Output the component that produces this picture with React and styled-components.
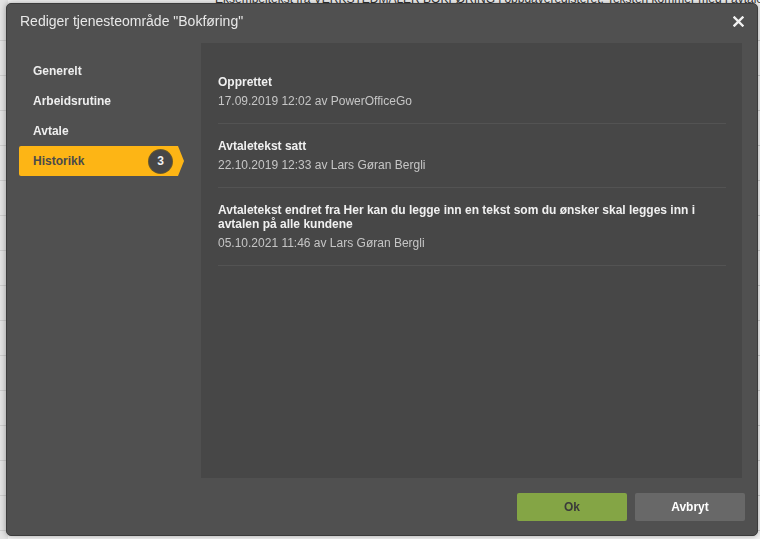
import React from 'react';
import styled, { createGlobalStyle } from 'styled-components';

const GlobalStyle = createGlobalStyle`
  html, body {
    margin: 0;
    padding: 0;
    background: #f4f4f4;
    font-family: "Liberation Sans", Arial, sans-serif;
    overflow: hidden;
  }
`;

const sections = ['Generelt', 'Arbeidsrutine', 'Avtale', 'Historikk'];

const history = [
  { title: 'Opprettet', meta: '17.09.2019 12:02 av PowerOfficeGo' },
  { title: 'Avtaletekst satt', meta: '22.10.2019 12:33 av Lars Gøran Bergli' },
  {
    title:
      'Avtaletekst endret fra Her kan du legge inn en tekst som du ønsker skal legges inn i avtalen på alle kundene',
    meta: '05.10.2021 11:46 av Lars Gøran Bergli',
  },
];

const App = () => {
  return (
    <>
      <GlobalStyle />
      <Page>
        <PageText>Eksempeltekst fra VERKSTEDMALER BOKFØRING i oppgaveregisteret. Teksten kommer med i avtalen</PageText>
        {Array.from({ length: 16 }).map((_, i) => (
          <PageRow key={i} />
        ))}
      </Page>
      <Dialog>
        <Header>
          <Title>Rediger tjenesteområde "Bokføring"</Title>
          <CloseButton aria-label="Lukk">
            <svg width="11" height="11" viewBox="0 0 11 11">
              <path d="M1.5 1.5 L9.5 9.5 M9.5 1.5 L1.5 9.5" stroke="#f2f2f2" strokeWidth="2.4" strokeLinecap="square" />
            </svg>
          </CloseButton>
        </Header>
        <Body>
          <Sidebar>
            {sections.map((s) => (
              <NavItem key={s} selected={s === 'Historikk'}>
                {s}
                {s === 'Historikk' && <Badge>3</Badge>}
              </NavItem>
            ))}
          </Sidebar>
          <Panel>
            {history.map((h, i) => (
              <Entry key={i}>
                <EntryTitle>{h.title}</EntryTitle>
                <EntryMeta>{h.meta}</EntryMeta>
              </Entry>
            ))}
          </Panel>
        </Body>
        <Footer>
          <Button variant="ok">Ok</Button>
          <Button>Avbryt</Button>
        </Footer>
      </Dialog>
    </>
  );
};

const Page = styled.div`
  height: 539px;
  background: #f6f6f6;
  background-image: linear-gradient(to right, #e4e4e4 0, #e4e4e4 8px, transparent 8px);
  overflow: hidden;
`;

const PageText = styled.div`
  margin-top: -8px;
  padding-left: 215px;
  height: 14px;
  font-size: 12px;
  color: #333;
  white-space: nowrap;
`;

const PageRow = styled.div`
  height: 34px;
  border-bottom: 1px solid #cfcfcf;
`;

const Dialog = styled.div`
  position: fixed;
  left: 6px;
  top: 3px;
  width: 752px;
  height: 533px;
  box-sizing: border-box;
  background: #505050;
  border: 1px solid #3c3c3c;
  border-radius: 5px;
  box-shadow: 0 0 6px rgba(0, 0, 0, 0.35);
  display: flex;
  flex-direction: column;
`;

const Header = styled.header`
  height: 39px;
  box-sizing: border-box;
  flex-shrink: 0;
  display: flex;
  align-items: center;
  justify-content: space-between;
  padding: 0 13px 5px 13px;
`;

const Title = styled.h1`
  margin: 0;
  font-size: 14px;
  font-weight: normal;
  color: #e8e8e8;
`;

const CloseButton = styled.button`
  background: none;
  border: 0;
  padding: 0;
  cursor: pointer;
  display: flex;
`;

const Body = styled.div`
  flex: 1;
  display: flex;
  padding-right: 15px;
  min-height: 0;
`;

const Sidebar = styled.nav`
  width: 182px;
  padding: 13px 0 0 12px;
  display: flex;
  flex-direction: column;
`;

const NavItem = styled.div`
  height: 30px;
  width: 165px;
  box-sizing: border-box;
  display: flex;
  align-items: center;
  padding: 0 12px 0 14px;
  font-size: 12px;
  font-weight: bold;
  color: ${(props) => (props.selected ? '#4a4a4a' : '#eeeeee')};
  background: ${(props) => (props.selected ? '#fdb515' : 'transparent')};
  clip-path: ${(props) =>
    props.selected ? 'polygon(0 0, 159px 0, 165px 50%, 159px 100%, 0 100%)' : 'none'};
  border-radius: 2px 0 0 2px;
`;

const Badge = styled.span`
  margin-left: auto;
  width: 23px;
  height: 23px;
  border-radius: 50%;
  background: #474747;
  box-shadow: 0 0 0 1px #6a5a2a;
  color: #f2f2f2;
  font-size: 12px;
  font-weight: bold;
  display: flex;
  align-items: center;
  justify-content: center;
`;

const Panel = styled.section`
  flex: 1;
  background: #474747;
  padding: 17px 16px 0 17px;
  overflow: hidden;
`;

const Entry = styled.div`
  padding: 15px 0 13px;
  border-bottom: 1px solid #535353;
`;

const EntryTitle = styled.div`
  font-size: 12px;
  line-height: 14px;
  font-weight: bold;
  color: #f0f0f0;
`;

const EntryMeta = styled.div`
  margin-top: 3px;
  font-size: 12px;
  line-height: 18px;
  color: #c6c6c6;
`;

const Footer = styled.footer`
  flex-shrink: 0;
  display: flex;
  justify-content: flex-end;
  gap: 8px;
  padding: 15px 12px 14px;
`;

const Button = styled.button`
  width: 110px;
  height: 28px;
  border: 0;
  border-radius: 2px;
  font-family: "Liberation Sans", Arial, sans-serif;
  font-size: 12px;
  font-weight: bold;
  cursor: pointer;
  background: ${(props) => (props.variant === 'ok' ? '#84a545' : '#686868')};
  color: ${(props) => (props.variant === 'ok' ? '#3a3a3a' : '#ffffff')};
`;

export default App;
